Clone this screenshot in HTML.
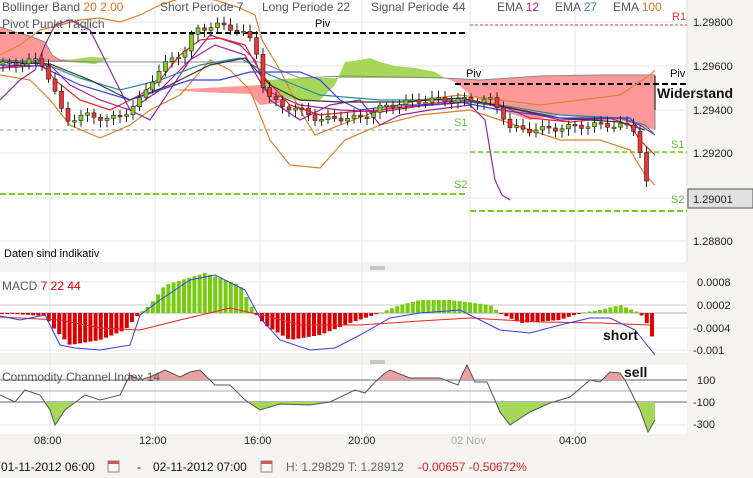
<!DOCTYPE html>
<html><head><meta charset="utf-8"><style>
body{margin:0;width:753px;height:478px;overflow:hidden;background:#f4f3f0;font-family:"Liberation Sans",sans-serif;}
svg{position:absolute;left:0;top:0}
text{font-family:"Liberation Sans",sans-serif}
</style></head><body>
<svg id="s" width="753" height="478" xmlns="http://www.w3.org/2000/svg">
<rect x="0" y="0" width="753" height="478" fill="#f4f3f0"/>
<rect x="0" y="0" width="687" height="262" fill="#fff"/>
<rect x="0" y="272" width="687" height="81" fill="#fff"/>
<rect x="0" y="365" width="687" height="69" fill="#fff"/>
<line x1="687" y1="0" x2="687" y2="262" stroke="#ddd"/>
<g stroke="#e6e6e6">
<line x1="50" y1="0" x2="50" y2="434"/><line x1="155" y1="0" x2="155" y2="434"/><line x1="260" y1="0" x2="260" y2="434"/><line x1="362" y1="0" x2="362" y2="434"/><line x1="470" y1="0" x2="470" y2="434"/><line x1="575" y1="0" x2="575" y2="434"/>
<line x1="0" y1="22" x2="687" y2="22"/><line x1="0" y1="66" x2="687" y2="66"/><line x1="0" y1="110" x2="687" y2="110"/><line x1="0" y1="153" x2="687" y2="153"/><line x1="0" y1="198" x2="687" y2="198"/><line x1="0" y1="241" x2="687" y2="241"/>
<line x1="0" y1="282" x2="687" y2="282"/><line x1="0" y1="328" x2="687" y2="328"/><line x1="0" y1="350" x2="687" y2="350"/>
<line x1="0" y1="425" x2="687" y2="425"/>
</g>
<line x1="0" y1="305" x2="687" y2="305" stroke="#ccc"/>
<line x1="0" y1="313" x2="687" y2="313" stroke="#aab"/>
<line x1="0" y1="380" x2="687" y2="380" stroke="#668"/>
<line x1="0" y1="391" x2="687" y2="391" stroke="#aab"/>
<line x1="0" y1="402" x2="687" y2="402" stroke="#668"/>
<!-- clouds -->
<polygon points="0,27 15,32 30,36 45,42 52,55 60,60 85,61 85,62 0,62" fill="#f99"/>
<polyline points="0,27 15,32 30,36 45,42 52,55 60,60 85,61" fill="none" stroke="#888"/>
<polygon points="68,60 90,57 110,58 95,64 68,62" fill="#a6d65a"/>
<polygon points="255,90 275,96 300,101 320,100 335,85 345,62 360,60 370,58 380,62 395,66 415,68 435,72 445,78 420,78 300,78 265,80" fill="#a6d65a"/>
<polygon points="170,90 200,92 250,94 260,105 280,103 280,90 260,85" fill="#f99"/>
<polygon points="445,78 480,80 540,76 600,75 655,75 655,130 620,120 600,120 560,115 530,120 500,110 470,95 455,82" fill="#f99"/>
<polyline points="0,62 60,61 95,62 260,62 300,78 345,76 445,78 480,80 540,76 600,75 655,75 655,130" fill="none" stroke="#888"/>
<!-- pivots -->
<line x1="0" y1="33" x2="467" y2="33" stroke="#000" stroke-width="2" stroke-dasharray="6,3"/>
<line x1="470" y1="25" x2="687" y2="25" stroke="#e33" stroke-dasharray="3,2"/>
<line x1="455" y1="84" x2="687" y2="84" stroke="#000" stroke-width="2" stroke-dasharray="6,3"/>
<line x1="0" y1="130" x2="467" y2="130" stroke="#999" stroke-dasharray="4,3"/>
<line x1="470" y1="152" x2="687" y2="152" stroke="#7c2" stroke-width="1.5" stroke-dasharray="5,3"/>
<line x1="0" y1="194" x2="467" y2="194" stroke="#7c2" stroke-width="2" stroke-dasharray="6,3"/>
<line x1="470" y1="211" x2="687" y2="211" stroke="#7c2" stroke-width="2" stroke-dasharray="6,3"/>
<g id="lines" fill="none" stroke-width="1.2">
<polyline stroke="#e08030" points="0,55 20,45 40,30 60,25 80,20 100,18 120,22 140,15 160,5 175,0 190,-5 215,0 240,8 255,15 262,40 280,70 300,110 315,135 340,125 380,110 420,100 460,95 500,100 540,105 580,100 620,95 650,75 655,70"/>
<polyline stroke="#e08030" points="0,75 30,80 50,100 70,125 100,138 130,125 150,110 180,95 210,60 230,70 250,90 270,140 290,165 320,168 345,140 380,125 420,115 470,110 500,120 530,130 560,140 600,140 630,150 645,175 655,185"/>
<polyline stroke="#8e2a9a" points="0,100 20,80 35,70 45,45 55,25 70,20 90,30 100,50 115,80 130,110 150,120 170,90 190,60 210,35 240,45 255,60 270,100 300,120 330,105 360,100 380,125 400,115 430,110 470,105 485,120 495,180 502,195 510,200"/>
<polyline stroke="#e22" points="0,68 40,62 55,80 80,100 110,110 140,95 160,80 180,55 200,40 220,38 245,45 262,75 290,105 320,115 350,112 380,110 420,105 460,100 500,105 530,118 570,122 610,118 630,125 640,140 655,155"/>
<polyline stroke="#b0208a" points="0,68 50,65 70,85 100,100 130,110 160,90 190,60 215,45 245,55 265,90 300,105 340,110 380,112 420,106 470,102 510,108 560,120 620,118 640,125 655,135"/>
<polyline stroke="#2a8a9a" points="0,60 40,62 80,78 120,90 160,80 200,65 240,58 270,75 320,95 380,100 450,100 500,105 560,115 620,118 645,125 655,135"/>
<polyline stroke="#333" points="0,62 50,64 90,80 130,100 170,85 210,65 245,58 270,85 300,100 340,102 400,102 460,98 500,106 560,118 620,122 645,130"/>
<polyline stroke="#3340e8" points="0,65 40,66 80,85 130,100 160,90 190,80 220,80 250,72 270,72 300,72 320,80 340,100 360,110 400,105 430,105 460,102 500,110 560,118 630,118 640,130"/>
</g>
<g id="candles"></g>
<g id="macd"></g>
<g id="cci"></g>
<polyline fill="none" stroke="#e22" stroke-width="1" points="0,317 60,320 100,328 140,330 180,320 230,308 270,317 300,325 360,325 420,321 470,318 540,322 600,323 650,325"/>
<polyline fill="none" stroke="#3340e8" stroke-width="1" points="0,316 20,320 45,315 60,345 75,348 100,350 130,345 140,315 160,300 190,280 215,275 245,290 260,318 280,340 310,350 335,348 360,335 390,318 420,313 460,310 480,320 500,330 530,333 560,325 590,318 610,318 635,330 655,355"/>
<g stroke="#999"><line x1="370" y1="267" x2="385" y2="267"/><line x1="370" y1="269" x2="385" y2="269"/><line x1="370" y1="361" x2="385" y2="361"/><line x1="370" y1="363" x2="385" y2="363"/></g>
<g font-size="12" fill="#555">
<text x="2" y="11">Bollinger Band <tspan fill="#e07020">20</tspan> <tspan fill="#e07020">2.00</tspan></text>
<text x="160" y="11">Short Periode  7</text>
<text x="262" y="11">Long Periode  22</text>
<text x="371" y="11">Signal Periode  44</text>
<text x="497" y="11">EMA <tspan fill="#b0208a">12</tspan></text>
<text x="555" y="11">EMA <tspan fill="#2a8a9a">27</tspan></text>
<text x="613" y="11">EMA <tspan fill="#e07020">100</tspan></text>
<text x="2" y="28">Pivot Punkt  Täglich</text>
<text x="2" y="290">MACD  <tspan fill="#d00">7  22  44</tspan></text>
<text x="2" y="381">Commodity Channel Index  14</text>
</g>
<g font-size="11" fill="#000">
<text x="4" y="257">Daten sind indikativ</text>
<text x="315" y="27">Piv</text><text x="466" y="77">Piv</text>
<text x="670" y="77">Piv</text>
</g>
<text x="672" y="20" font-size="11" fill="#e33">R1</text>
<g font-size="11" fill="#6b3">
<text x="454" y="126">S1</text><text x="454" y="188">S2</text>
<text x="671" y="148">S1</text><text x="671" y="203">S2</text>
</g>
<line x1="655" y1="76" x2="655" y2="110" stroke="#000"/>
<text x="657" y="98" font-size="14" font-weight="bold" fill="#111">Widerstand</text>
<text x="603" y="340" font-size="14" font-weight="bold" fill="#111">short</text>
<text x="624" y="377" font-size="14" font-weight="bold" fill="#111">sell</text>
<g font-size="11" fill="#222">
<text x="693" y="26">1.29800</text><text x="693" y="70">1.29600</text><text x="693" y="114">1.29400</text><text x="693" y="157">1.29200</text><text x="693" y="245">1.28800</text>
<text x="697" y="286">0.0008</text><text x="697" y="309">0.0002</text><text x="693" y="332">-0.0004</text><text x="693" y="354">-0.001</text>
<text x="697" y="384">100</text><text x="693" y="406">-100</text><text x="693" y="428">-300</text>
</g>
<rect x="688" y="189" width="65" height="19" fill="#e0e0e0" stroke="#555"/>
<text x="693" y="203" font-size="11" fill="#222">1.29001</text>
<g font-size="11" fill="#222">
<text x="34" y="444">08:00</text><text x="139" y="444">12:00</text><text x="244" y="444">16:00</text><text x="348" y="444">20:00</text><text x="451" y="444" fill="#aaa">02 Nov</text><text x="559" y="444">04:00</text>
</g>
<g font-size="12">
<text x="1" y="471" fill="#111">01-11-2012 06:00</text>
<text x="137" y="471" fill="#111">-</text>
<text x="153" y="471" fill="#111">02-11-2012 07:00</text>
<text x="286" y="471" fill="#666">H: 1.29829  T: 1.28912</text>
<text x="418" y="471" fill="#d22">-0.00657  -0.50672%</text>
</g>
<g fill="none" stroke="#888"><rect x="108" y="461" width="11" height="11"/><rect x="261" y="461" width="11" height="11"/></g>
<g fill="#c55"><rect x="108" y="461" width="11" height="3"/><rect x="261" y="461" width="11" height="3"/></g>
</svg>
<script>
var NS="http://www.w3.org/2000/svg";
function interp(p,x){for(var i=0;i<p.length-1;i++){if(x>=p[i][0]&&x<=p[i+1][0]){var t=(x-p[i][0])/(p[i+1][0]-p[i][0]);return p[i][1]+t*(p[i+1][1]-p[i][1]);}}return p[p.length-1][1];}
function el(g,n,a){var e=document.createElementNS(NS,n);for(var k in a)e.setAttribute(k,a[k]);g.appendChild(e);return e;}
var P=[[0,65],[40,60],[50,80],[65,120],[90,115],[110,120],[130,110],[140,100],[155,75],[170,60],[185,50],[195,30],[215,25],[240,30],[255,45],[265,95],[280,105],[300,110],[320,120],[340,118],[360,118],[380,108],[400,103],[430,100],[460,100],[490,100],[500,110],[510,128],[530,130],[560,128],[590,125],[620,125],[635,130],[640,150],[645,175],[650,200],[655,205]];
var g=document.getElementById("candles");var prev=65;
for(var x=3;x<=652;x+=6.5){var c=interp(P,x)+Math.sin(x*1.7)*3;var o=prev;var up=c<o;var t=Math.min(o,c),b=Math.max(o,c);if(b-t<1.5){b=t+1.5;}
el(g,"line",{x1:x,y1:t-3-Math.abs(Math.sin(x))*4,x2:x,y2:b+3+Math.abs(Math.cos(x))*4,stroke:"#222"});
el(g,"rect",{x:x-2,y:t,width:4,height:b-t,fill:up?"#8c2":"#e33",stroke:"#222","stroke-width":0.6});prev=c;}
var M=[[0,313],[45,316],[55,330],[70,345],[100,340],[125,330],[140,313],[150,305],[165,285],[205,273],[240,285],[255,313],[265,325],[290,340],[320,335],[350,323],[380,313],[400,305],[420,300],[450,300],[490,305],[500,313],[520,323],[560,320],[580,313],[600,310],[620,305],[640,313],[648,325],[655,345]];
g=document.getElementById("macd");
for(var x=2;x<=655;x+=5.2){var v=interp(M,x);var up=v<313;el(g,"rect",{x:x-2,y:Math.min(v,313),width:4,height:Math.max(1,Math.abs(v-313)),fill:up?"#7c1":"#d00"});}
var C=[[0,395],[15,402],[25,390],[40,395],[50,410],[55,425],[65,410],[85,395],[100,400],[120,395],[130,375],[140,380],[150,377],[165,370],[180,377],[190,372],[200,370],[215,385],[230,385],[245,400],[260,410],[280,404],[310,405],[330,402],[355,390],[365,393],[375,382],[385,373],[390,370],[410,378],[440,378],[458,385],[462,375],[467,365],[475,382],[487,382],[500,412],[510,425],[530,412],[550,403],[570,397],[590,380],[600,382],[610,372],[620,373],[625,380],[640,410],[648,432],[655,420]];
g=document.getElementById("cci");
var pts=C.map(function(p){return p[0]+","+p[1]}).join(" ");
var d=el(g,"defs",{});
var c1=el(d,"clipPath",{id:"ca"});el(c1,"rect",{x:0,y:300,width:700,height:80});
var c2=el(d,"clipPath",{id:"cb"});el(c2,"rect",{x:0,y:402,width:700,height:40});
el(g,"polygon",{points:"0,380 "+pts+" 655,380",fill:"#e8a0a0","clip-path":"url(#ca)"});
el(g,"polygon",{points:"0,402 "+pts+" 655,402",fill:"#a6d65a","clip-path":"url(#cb)"});
el(g,"polyline",{points:pts,fill:"none",stroke:"#555","stroke-width":1});
</script>
</body></html>
